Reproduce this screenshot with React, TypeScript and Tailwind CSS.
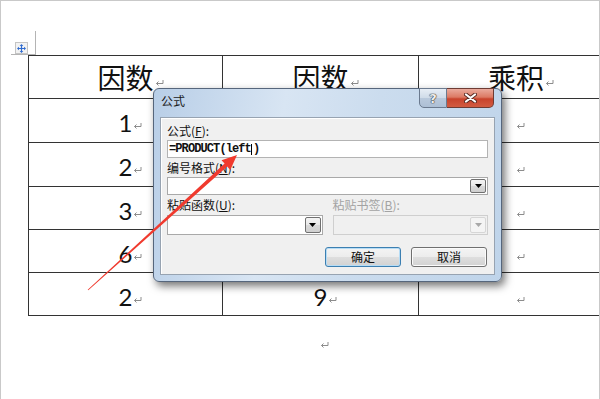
import React from "react";

function ParaMark({ className = "" }: { className?: string }) {
  return (
    <svg
      width="9"
      height="6"
      viewBox="0 0 9 6"
      className={className}
      fill="none"
      stroke="#8c8c8c"
      strokeWidth="1"
    >
      <path d="M8 0 V3.5 H1.5" />
      <path d="M3.5 1.5 L1.5 3.5 L3.5 5.5" />
    </svg>
  );
}

function HeadCell({ text }: { text: string }) {
  return (
    <div className="border-r border-b border-[#333] flex items-center justify-center">
      <span className="relative inline-block text-[28px] leading-[28px] text-[#111] font-['Noto_Sans_CJK_SC',sans-serif]">
        {text}
        <ParaMark className="absolute left-[calc(100%+1px)] top-[17px]" />
      </span>
    </div>
  );
}

function NumCell({ text }: { text: string }) {
  return (
    <div className="border-r border-b border-[#333] flex items-center justify-center pt-[5px]">
      <span className="relative inline-block text-[24px] leading-[24px] text-[#111] font-['Lato',sans-serif]">
        {text}
        <ParaMark className="absolute left-[calc(100%+1px)] top-[12px]" />
      </span>
    </div>
  );
}

function EmptyCell() {
  return (
    <div className="border-r border-b border-[#333] flex items-center justify-center pt-[5px]">
      <span className="relative inline-block w-0 h-[24px]">
        <ParaMark className="absolute left-0 top-[12px]" />
      </span>
    </div>
  );
}

function DropBtn({ disabled = false }: { disabled?: boolean }) {
  return disabled ? (
    <div className="ml-auto w-[16px] h-full border border-[#d6d6d6] rounded-[2px] bg-[#f4f4f4] flex items-center justify-center">
      <svg width="7" height="4" viewBox="0 0 7 4">
        <path d="M0 0 H7 L3.5 4 Z" fill="#a8a8a8" />
      </svg>
    </div>
  ) : (
    <div className="ml-auto w-[16px] h-full border border-[#707070] rounded-[2px] bg-[linear-gradient(to_bottom,#f4f4f4_0%,#e8e8e8_50%,#d9d9d9_51%,#cfcfcf_100%)] flex items-center justify-center">
      <svg width="7" height="4" viewBox="0 0 7 4">
        <path d="M0 0 H7 L3.5 4 Z" fill="#000" />
      </svg>
    </div>
  );
}

function Label({ k, name, disabled = false }: { k: string; name: string; disabled?: boolean }) {
  return (
    <div
      className={
        disabled
          ? "h-[14px] leading-[14px] text-[12px] text-[#a3a3a3] whitespace-nowrap"
          : "h-[14px] leading-[14px] text-[12px] text-[#111] whitespace-nowrap"
      }
    >
      {name}(<span className="underline">{k}</span>):
    </div>
  );
}

export default function App() {
  return (
    <div className="relative w-[600px] h-[399px] overflow-hidden bg-white border-l border-t border-r border-[#c9c9c9] font-['Noto_Sans_CJK_SC',sans-serif]">
      {/* text-area crop mark */}
      <div className="absolute left-[34px] top-[30px] w-px h-[24px] bg-[#b4b4b4]" />
      <div className="absolute left-[10px] top-[53px] w-[25px] h-px bg-[#b4b4b4]" />
      {/* table move handle */}
      <div className="absolute left-[14px] top-[41px] w-[13px] h-[12px] border border-[#c4c4c4] bg-[#f2f2f2] flex items-center justify-center">
        <svg width="9" height="9" viewBox="0 0 9 9">
          <path d="M4.5 1 V8 M1 4.5 H8" stroke="#2f6bd0" strokeWidth="1.2" />
          <path d="M4.5 0 L6.3 2 H2.7 Z M4.5 9 L6.3 7 H2.7 Z M0 4.5 L2 2.7 V6.3 Z M9 4.5 L7 2.7 V6.3 Z" fill="#2f6bd0" />
        </svg>
      </div>

      {/* table */}
      <div className="ml-[27px] mt-[54px] w-[586px] border-l border-t border-[#333] grid grid-cols-[194px_196px_195px] grid-rows-[43px_44px_44px_43px_43px_43px]">
        <HeadCell text="因数" />
        <HeadCell text="因数" />
        <HeadCell text="乘积" />

        <NumCell text="1" />
        <EmptyCell />
        <EmptyCell />

        <NumCell text="2" />
        <EmptyCell />
        <EmptyCell />

        <NumCell text="3" />
        <EmptyCell />
        <EmptyCell />

        <NumCell text="6" />
        <EmptyCell />
        <EmptyCell />

        <NumCell text="2" />
        <NumCell text="9" />
        <EmptyCell />
      </div>
      <div className="mt-[26px] pl-[319px] h-[6px] flex">
        <ParaMark />
      </div>

      {/* dialog */}
      <div className="absolute left-[152px] top-[87px] w-[349px] h-[194px] rounded-[6px] border border-[#56667c] bg-[linear-gradient(100deg,#b8cee7_0%,#d8e5f3_35%,#cbdcee_60%,#bfd4ea_100%)] shadow-[3px_4px_9px_rgba(0,0,0,0.55)] flex flex-col">
        <div className="h-[28px] flex items-start justify-between pl-[7px] pr-[7px]">
          <div className="pt-[4px] text-[12px] leading-[16px] text-[#1a1a1a]">公式</div>
          <div className="flex -mt-px">
            <div className="w-[28px] h-[20px] border border-[#6b7a8f] rounded-bl-[5px] bg-[linear-gradient(to_bottom,#e6edf5_0%,#cfdbe8_50%,#b9c9dc_51%,#adbfd5_100%)] flex items-center justify-center">
              <span className="font-['DejaVu_Sans',sans-serif] font-bold text-[13px] leading-[13px] text-[#eeeeee] [text-shadow:0_0_1px_#333,0_0_1px_#333,0_0_1px_#333]">
                ?
              </span>
            </div>
            <div className="w-[47px] h-[20px] border border-l-0 border-[#6e3b33] rounded-br-[5px] bg-[linear-gradient(to_bottom,#eaaa9c_0%,#dc7a64_45%,#c8432c_55%,#d25b41_100%)] flex items-center justify-center">
              <svg width="13" height="10" viewBox="0 0 13 10">
                <path d="M2 1.5 L11 8.5 M11 1.5 L2 8.5" stroke="#5a2a22" strokeWidth="4" strokeLinecap="round" />
                <path d="M2 1.5 L11 8.5 M11 1.5 L2 8.5" stroke="#ffffff" strokeWidth="2.2" strokeLinecap="round" />
              </svg>
            </div>
          </div>
        </div>

        <div className="mx-[6px] w-[335px] h-[158px] border border-[#97a3b1] bg-[#f0f0f0] shadow-[inset_1px_1px_0_#ffffff] px-[6px] flex flex-col">
          <div className="mt-[6px]">
            <Label name="公式" k="F" />
          </div>
          <div className="mt-[2px] h-[18px] border border-[#b3b3b3] bg-white flex items-center pl-px">
            <span className="font-['Liberation_Mono',monospace] font-bold text-[12px] leading-[16px] tracking-[-0.9px] text-[#111] whitespace-nowrap flex items-center">
              =PRODUCT(left
              <span className="inline-block w-px h-[11px] bg-black mx-[0.5px]" />)
            </span>
          </div>

          <div className="mt-[3px]">
            <Label name="编号格式" k="N" />
          </div>
          <div className="mt-[2px] h-[18px] border border-[#a9a9a9] bg-white flex p-px">
            <DropBtn />
          </div>

          <div className="mt-[3px] grid grid-cols-2 gap-[10px]">
            <Label name="粘贴函数" k="U" />
            <Label name="粘贴书签" k="B" disabled />
          </div>
          <div className="mt-[3px] grid grid-cols-2 gap-[10px]">
            <div className="h-[20px] border border-[#a9a9a9] bg-white flex p-px">
              <DropBtn />
            </div>
            <div className="h-[20px] border border-[#cfcfcf] bg-[#f0f0f0] flex p-px">
              <DropBtn disabled />
            </div>
          </div>

          <div className="mt-[12px] flex justify-end gap-[10px] pr-[1px]">
            <div className="w-[76px] h-[20px] rounded-[3px] border border-[#3c7fb1] shadow-[inset_0_0_0_1px_#b6dcf5] bg-[linear-gradient(to_bottom,#f4f4f4_0%,#ececec_50%,#dedede_51%,#d2d2d2_100%)] flex items-center justify-center text-[12px] leading-[14px] text-[#111]">
              确定
            </div>
            <div className="w-[76px] h-[20px] rounded-[3px] border border-[#707070] shadow-[inset_0_0_0_1px_#fbfbfb] bg-[linear-gradient(to_bottom,#f4f4f4_0%,#ececec_50%,#dedede_51%,#d2d2d2_100%)] flex items-center justify-center text-[12px] leading-[14px] text-[#111]">
              取消
            </div>
          </div>
        </div>
      </div>

      {/* red arrow */}
      <svg
        className="absolute left-[-1px] top-[-1px] pointer-events-none"
        width="600"
        height="399"
        viewBox="0 0 600 399"
      >
        <polygon
          points="88.3,290.3 227.2,166.6 230.3,169.9 237,155 221.5,160.3 224.6,163.6 87.7,289.7"
          fill="#f03a2e"
        />
      </svg>
    </div>
  );
}
